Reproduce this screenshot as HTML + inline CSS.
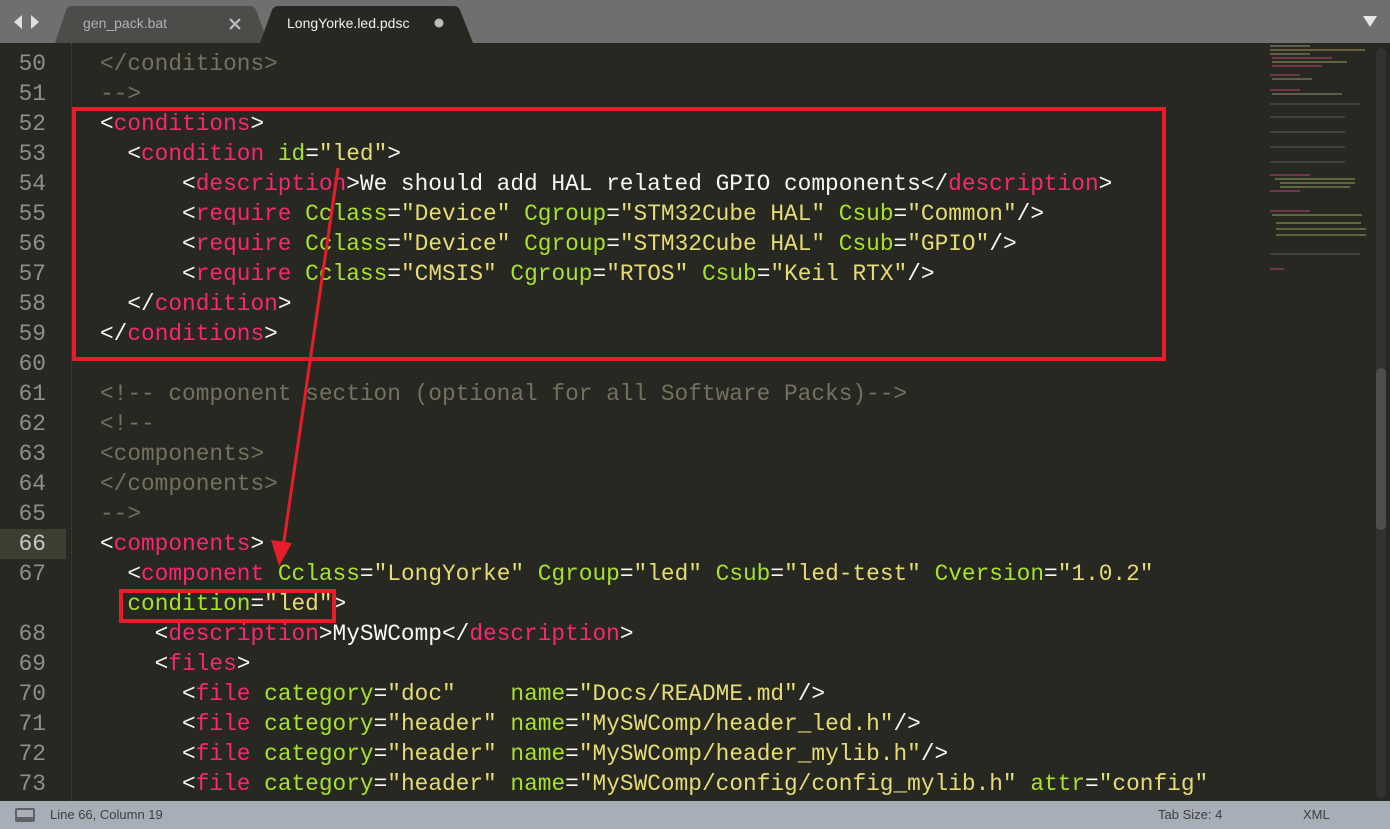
<!DOCTYPE html>
<html><head><meta charset="utf-8"><style>
*{margin:0;padding:0;box-sizing:border-box}
body{width:1390px;height:829px;overflow:hidden;background:#272822;position:relative;font-family:"Liberation Sans",sans-serif}
#tabs{position:absolute;left:0;top:0;width:1390px;height:43px;background:#6f6f6f}
#gut{position:absolute;left:0;top:43px;width:72px;height:758px}
.ln{position:absolute;left:0;width:46px;text-align:right;font:22.8px/30px "Liberation Mono",monospace;color:#8f908a}
#code{position:absolute;left:72.6px;top:49px;font:22.8px/30px "Liberation Mono",monospace;color:#f8f8f2;white-space:pre}
.t{color:#f92672}.a{color:#a6e22e}.s{color:#e6db74}.c{color:#75715e}
#status{position:absolute;left:0;top:801px;width:1390px;height:28px;background:#a8aeb7;font-size:13px;color:#3c3f44}
.mm{position:absolute;height:2px;opacity:.55}
</style></head><body>
<div id="tabs">
<svg width="1390" height="43" style="position:absolute;left:0;top:0">
<polygon points="14,22 22,15 22,29" fill="#e0e0e0"/><polygon points="31,15 39,22 31,29" fill="#e0e0e0"/>
<path d="M55,43 L66,10 Q68,6 72,6 L250,6 Q254,6 256,10 L268,43 Z" fill="#4c4c48"/>
<path d="M260,43 L272,10 Q274,6 278,6 L454,6 Q458,6 460,10 L473,43 Z" fill="#272822"/>
<path d="M230,19 L240,29 M240,19 L230,29" stroke="#bdbdbd" stroke-width="2.2"/>
<circle cx="439" cy="23" r="4.5" fill="#bdbdbd"/>
<polygon points="1363,16 1377,16 1370,27" fill="#e8e8e8"/>
</svg>
<div style="position:absolute;left:83px;top:15px;font-size:14px;color:#b0b0b0">gen_pack.bat</div>
<div style="position:absolute;left:287px;top:15px;font-size:14px;color:#f0f0f0">LongYorke.led.pdsc</div>
</div>
<div style="position:absolute;left:0;top:529px;width:66px;height:30px;background:#3e3d32"></div>
<div style="position:absolute;left:71px;top:43px;height:758px;border-left:1px dotted #45463e"></div>
<div id="gut">
<div class="ln" style="top:6px">50</div><div class="ln" style="top:36px">51</div><div class="ln" style="top:66px">52</div><div class="ln" style="top:96px">53</div><div class="ln" style="top:126px">54</div><div class="ln" style="top:156px">55</div><div class="ln" style="top:186px">56</div><div class="ln" style="top:216px">57</div><div class="ln" style="top:246px">58</div><div class="ln" style="top:276px">59</div><div class="ln" style="top:306px">60</div><div class="ln" style="top:336px">61</div><div class="ln" style="top:366px">62</div><div class="ln" style="top:396px">63</div><div class="ln" style="top:426px">64</div><div class="ln" style="top:456px">65</div><div class="ln" style="top:486px;color:#c8c8c0">66</div><div class="ln" style="top:516px">67</div><div class="ln" style="top:576px">68</div><div class="ln" style="top:606px">69</div><div class="ln" style="top:636px">70</div><div class="ln" style="top:666px">71</div><div class="ln" style="top:696px">72</div><div class="ln" style="top:726px">73</div>
</div>
<div id="code"><span class="c">  &lt;/conditions&gt;</span>
<span class="c">  --&gt;</span>
  &lt;<span class="t">conditions</span>&gt;
    &lt;<span class="t">condition</span> <span class="a">id</span>=<span class="s">"led"</span>&gt;
        &lt;<span class="t">description</span>&gt;We should add HAL related GPIO components&lt;/<span class="t">description</span>&gt;
        &lt;<span class="t">require</span> <span class="a">Cclass</span>=<span class="s">"Device"</span> <span class="a">Cgroup</span>=<span class="s">"STM32Cube HAL"</span> <span class="a">Csub</span>=<span class="s">"Common"</span>/&gt;
        &lt;<span class="t">require</span> <span class="a">Cclass</span>=<span class="s">"Device"</span> <span class="a">Cgroup</span>=<span class="s">"STM32Cube HAL"</span> <span class="a">Csub</span>=<span class="s">"GPIO"</span>/&gt;
        &lt;<span class="t">require</span> <span class="a">Cclass</span>=<span class="s">"CMSIS"</span> <span class="a">Cgroup</span>=<span class="s">"RTOS"</span> <span class="a">Csub</span>=<span class="s">"Keil RTX"</span>/&gt;
    &lt;/<span class="t">condition</span>&gt;
  &lt;/<span class="t">conditions</span>&gt;

<span class="c">  &lt;!-- component section (optional for all Software Packs)--&gt;</span>
<span class="c">  &lt;!--</span>
<span class="c">  &lt;components&gt;</span>
<span class="c">  &lt;/components&gt;</span>
<span class="c">  --&gt;</span>
  &lt;<span class="t">components</span>&gt;
    &lt;<span class="t">component</span> <span class="a">Cclass</span>=<span class="s">"LongYorke"</span> <span class="a">Cgroup</span>=<span class="s">"led"</span> <span class="a">Csub</span>=<span class="s">"led-test"</span> <span class="a">Cversion</span>=<span class="s">"1.0.2"</span>
    <span class="a">condition</span>=<span class="s">"led"</span>&gt;
      &lt;<span class="t">description</span>&gt;MySWComp&lt;/<span class="t">description</span>&gt;
      &lt;<span class="t">files</span>&gt;
        &lt;<span class="t">file</span> <span class="a">category</span>=<span class="s">"doc"</span>    <span class="a">name</span>=<span class="s">"Docs/README.md"</span>/&gt;
        &lt;<span class="t">file</span> <span class="a">category</span>=<span class="s">"header"</span> <span class="a">name</span>=<span class="s">"MySWComp/header_led.h"</span>/&gt;
        &lt;<span class="t">file</span> <span class="a">category</span>=<span class="s">"header"</span> <span class="a">name</span>=<span class="s">"MySWComp/header_mylib.h"</span>/&gt;
        &lt;<span class="t">file</span> <span class="a">category</span>=<span class="s">"header"</span> <span class="a">name</span>=<span class="s">"MySWComp/config/config_mylib.h"</span> <span class="a">attr</span>=<span class="s">"config"</span></div>
<div style="position:absolute;left:1376px;top:48px;width:10px;height:750px;background:#32332d;border-radius:5px"></div>
<div style="position:absolute;left:1376px;top:368px;width:10px;height:162px;background:#4e4f4a;border-radius:5px"></div>
<div class="mm" style="left:1270px;top:45px;width:40px;background:#8a8a6a"></div>
<div class="mm" style="left:1270px;top:49px;width:95px;background:#a08a5a"></div>
<div class="mm" style="left:1270px;top:53px;width:40px;background:#8a8a6a"></div>
<div class="mm" style="left:1272px;top:57px;width:60px;background:#b04070"></div>
<div class="mm" style="left:1272px;top:61px;width:75px;background:#8a9a50"></div>
<div class="mm" style="left:1272px;top:65px;width:50px;background:#b04070"></div>
<div class="mm" style="left:1270px;top:74px;width:30px;background:#b04070"></div>
<div class="mm" style="left:1272px;top:78px;width:40px;background:#8a8a6a"></div>
<div class="mm" style="left:1270px;top:89px;width:30px;background:#b04070"></div>
<div class="mm" style="left:1272px;top:93px;width:70px;background:#8a8a6a"></div>
<div class="mm" style="left:1270px;top:103px;width:90px;background:#55554a"></div>
<div class="mm" style="left:1270px;top:116px;width:75px;background:#55554a"></div>
<div class="mm" style="left:1270px;top:131px;width:75px;background:#55554a"></div>
<div class="mm" style="left:1270px;top:146px;width:75px;background:#55554a"></div>
<div class="mm" style="left:1270px;top:161px;width:75px;background:#55554a"></div>
<div class="mm" style="left:1270px;top:174px;width:40px;background:#b04070"></div>
<div class="mm" style="left:1275px;top:178px;width:80px;background:#8a9a50"></div>
<div class="mm" style="left:1280px;top:182px;width:75px;background:#8a9a50"></div>
<div class="mm" style="left:1280px;top:186px;width:70px;background:#8a9a50"></div>
<div class="mm" style="left:1270px;top:190px;width:30px;background:#b04070"></div>
<div class="mm" style="left:1270px;top:210px;width:40px;background:#b04070"></div>
<div class="mm" style="left:1272px;top:214px;width:90px;background:#8a9a50"></div>
<div class="mm" style="left:1276px;top:222px;width:85px;background:#8a9a50"></div>
<div class="mm" style="left:1276px;top:228px;width:90px;background:#8a9a50"></div>
<div class="mm" style="left:1276px;top:234px;width:90px;background:#8a9a50"></div>
<div class="mm" style="left:1270px;top:253px;width:90px;background:#55554a"></div>
<div class="mm" style="left:1270px;top:268px;width:14px;background:#b04070"></div>
<div style="position:absolute;left:72px;top:107px;width:1094px;height:254px;border:4px solid #e61e2a"></div>
<div style="position:absolute;left:119px;top:589px;width:217px;height:34px;border:4px solid #e61e2a"></div>
<svg width="1390" height="829" style="position:absolute;left:0;top:0">
<line x1="338" y1="168" x2="283" y2="548" stroke="#e61e2a" stroke-width="3"/>
<polygon points="279,566 271,540 292,543" fill="#e61e2a"/>
</svg>
<div id="status">
<div style="position:absolute;left:15px;top:7px;width:20px;height:14px;border:2px solid #5f6268;border-bottom-width:5px;border-radius:2px"></div>
<div style="position:absolute;left:50px;top:6px">Line 66, Column 19</div>
<div style="position:absolute;left:1158px;top:6px">Tab Size: 4</div>
<div style="position:absolute;left:1303px;top:6px">XML</div>
</div>
</body></html>
